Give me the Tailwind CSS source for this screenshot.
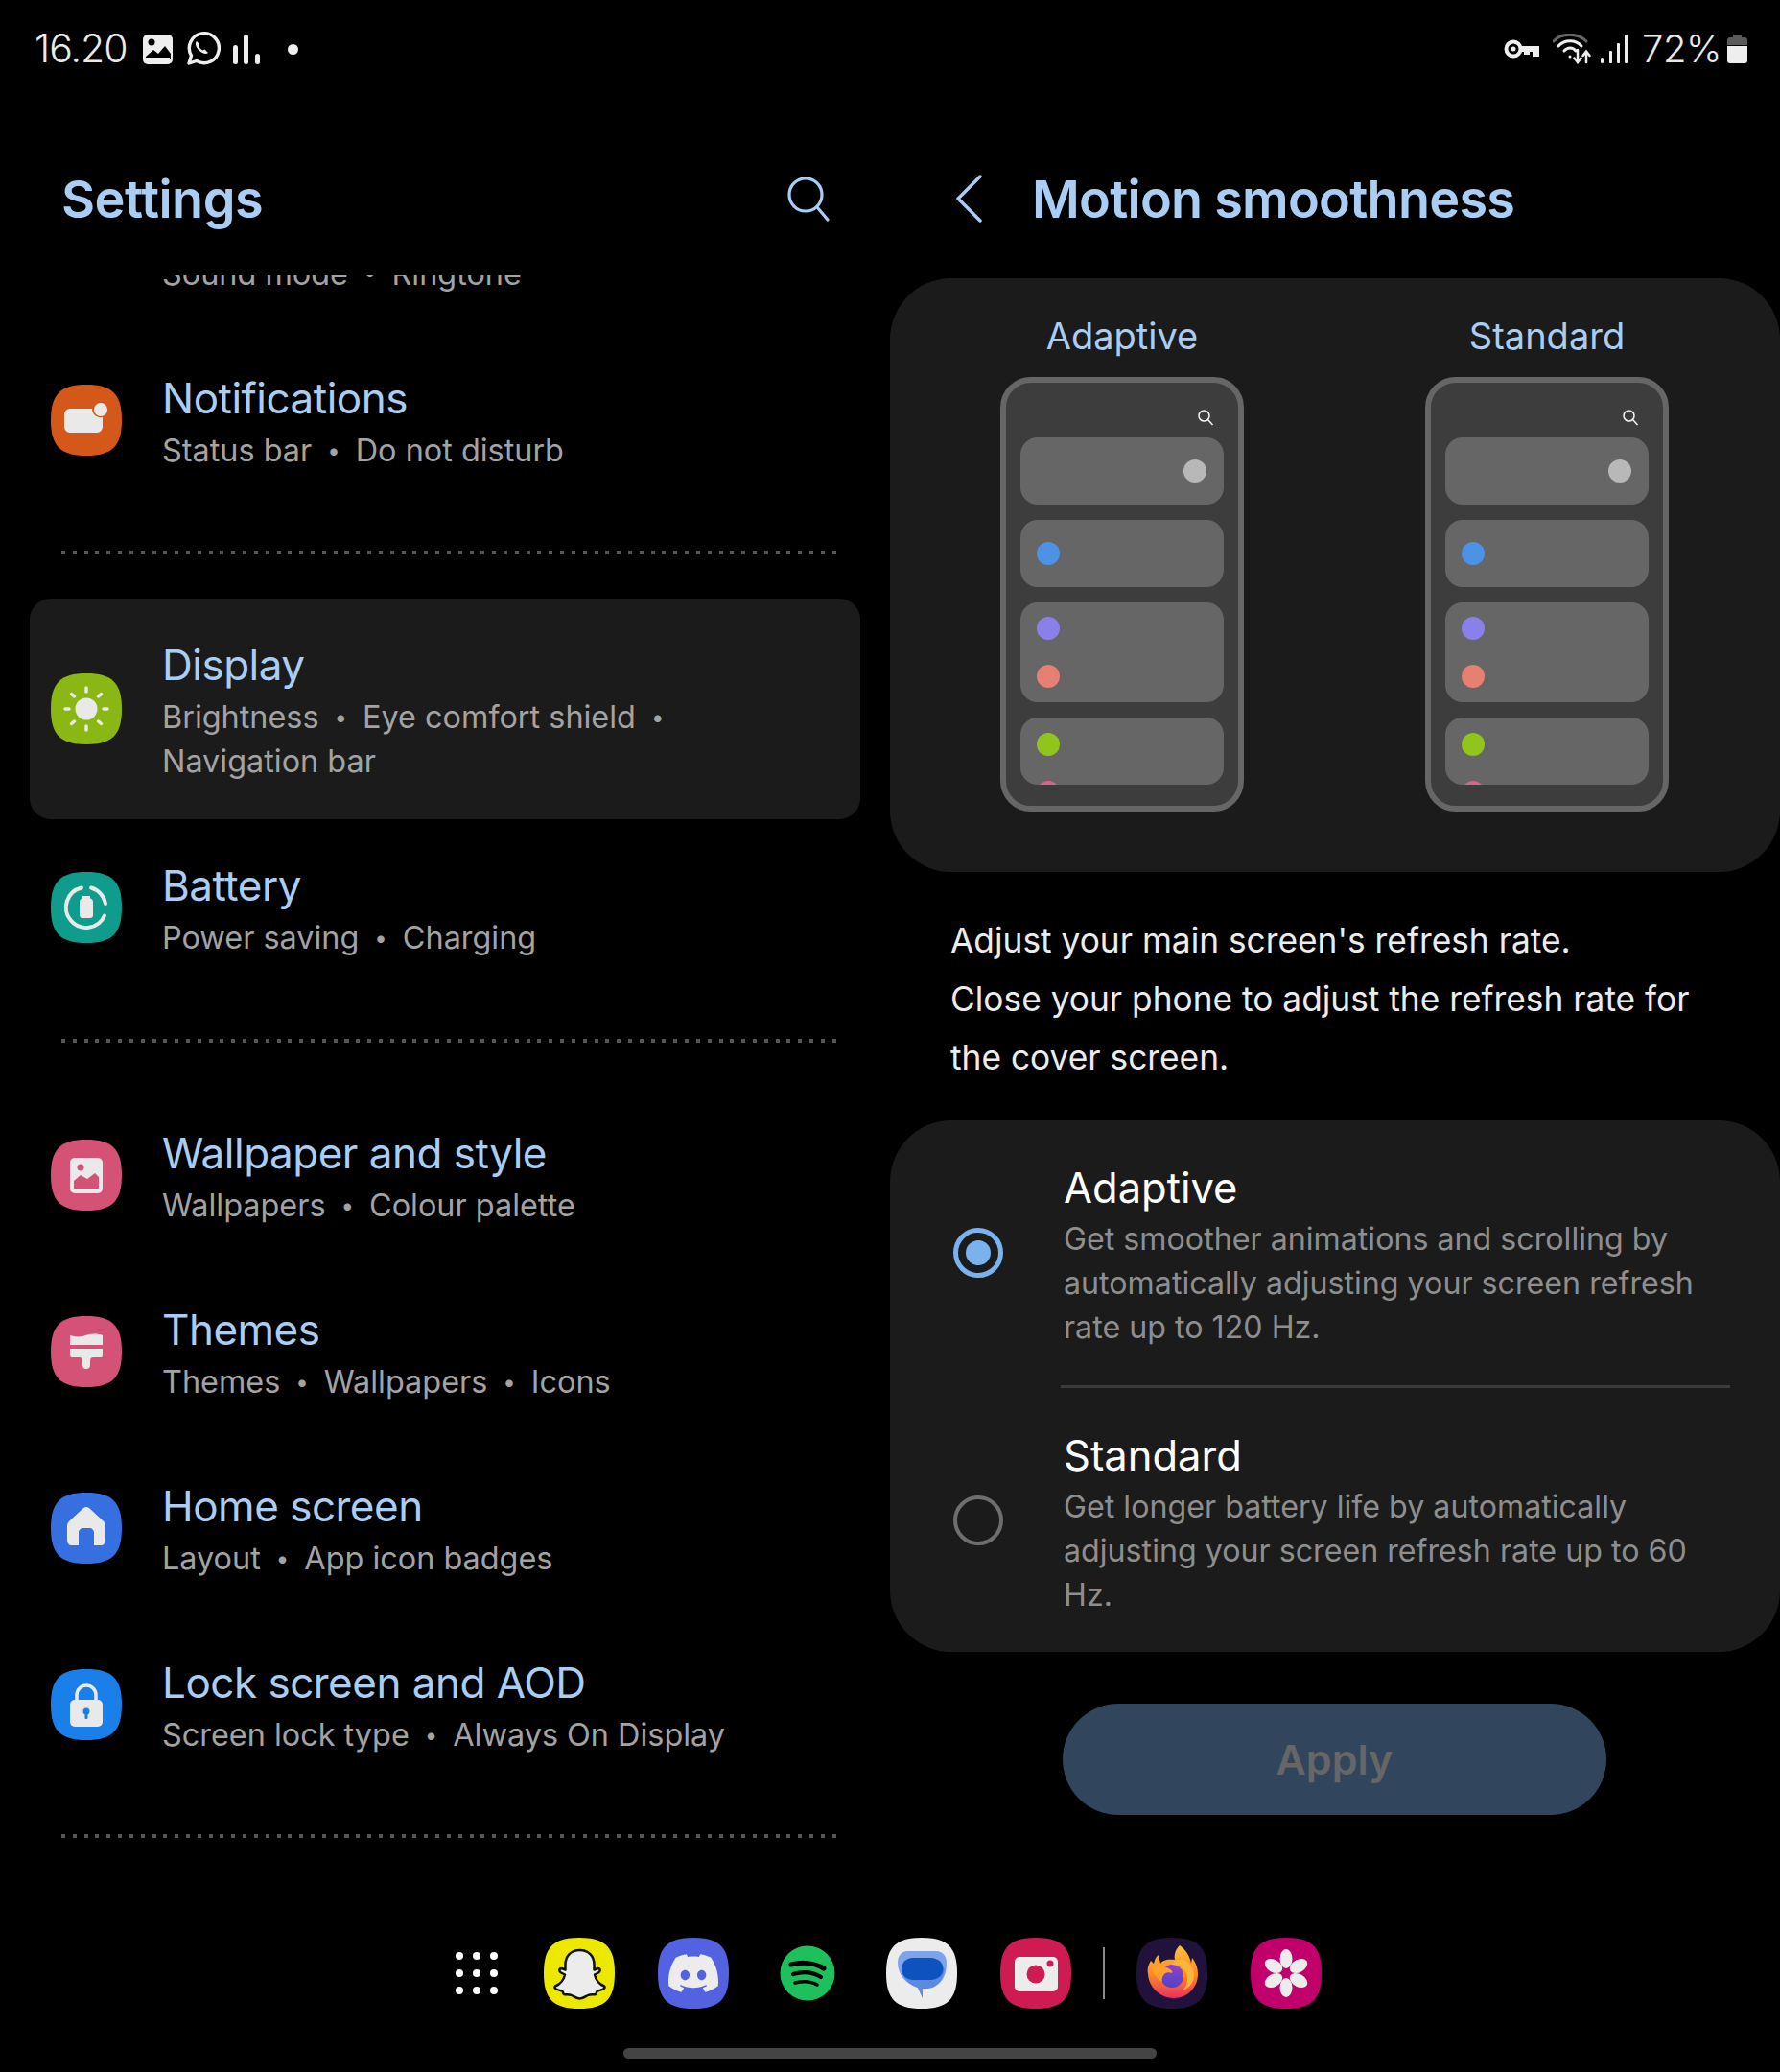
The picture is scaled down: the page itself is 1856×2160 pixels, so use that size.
<!doctype html>
<html lang="en"><head><meta charset="utf-8"><title>Motion smoothness</title>
<script src="https://cdn.jsdelivr.net/npm/@tailwindcss/browser@4"></script></head>
<body class="bg-black">
<div class="w-[1856px] h-[2160px] bg-black overflow-hidden flex flex-col font-['Inter','Liberation_Sans',sans-serif] text-white">
  <!-- status bar -->
  <div class="h-[102px] flex items-center justify-between pl-[36px] pr-[34px] text-[#eaeaea] shrink-0">
    <div class="flex items-center">
      <span class="text-[41px] font-light tracking-[-1px] w-[110px]">16.20</span>
      <svg class="ml-[2px]" width="34" height="34" viewBox="0 0 34 34"><rect x="1" y="2" width="31" height="31" rx="5" fill="#eee"/><circle cx="10" cy="10" r="3.5" fill="#000"/><path d="M4 25l8-7 5 4 7-8 6 8v5H4z" fill="#000"/><rect x="4" y="26" width="25" height="3" fill="#eee"/></svg>
      <svg class="ml-[10px]" width="38" height="38" viewBox="0 0 38 38" fill="none"><path d="M5 34l2.5-8A15.5 15.5 0 1 1 13 31.5z" stroke="#eee" stroke-width="3.4" stroke-linejoin="round"/><path d="M13 11c-2 2-1 6 2.500 9.500s7.500 4.500 9.500 2.500l-3.500-3.500-2 1c-1.500-.5-4-3-4.500-4.500l1-2z" fill="#eee"/></svg>
      <svg class="ml-[12px]" width="32" height="34" viewBox="0 0 32 34" fill="#eee"><rect x="1" y="13" width="5" height="20" rx="2.500"/><rect x="12" y="2" width="5" height="31" rx="2.500"/><rect x="24" y="22" width="5" height="11" rx="2.500"/></svg>
      <span class="ml-[26px] w-[11px] h-[11px] rounded-full bg-[#eee]"></span>
    </div>
    <div class="flex items-center">
      <svg width="38" height="22" viewBox="0 0 38 22" fill="none"><circle cx="10" cy="11" r="7.500" stroke="#eee" stroke-width="4"/><circle cx="10" cy="11" r="2.500" fill="#eee"/><path d="M17 8h20v11h-7v-5h-3v3h-6v-3h-4z" fill="#eee"/></svg>
      <svg class="ml-[13px]" width="40" height="32" viewBox="0 0 40 32" fill="none" stroke="#eee" stroke-width="3" stroke-linecap="round"><path d="M1 8C9 -1 26 -1 35 8" stroke="#666"/><path d="M6 13C12 6 24 6 30 13"/><path d="M12 18c3.500-4 9-4 12 0"/><circle cx="18" cy="24" r="1.500" fill="#eee" stroke="none"/><path d="M26 17v12m-3.500-3.500L26 30l3.500-4.500" stroke-width="2.500"/><path d="M35 30V19m-3.500 4L35 18.500l3.500 4.500" stroke-width="2.500"/></svg>
      <svg class="ml-[10px]" width="28" height="30" viewBox="0 0 28 30" fill="#eee"><rect x="0" y="24" width="3" height="6" rx="1.500"/><rect x="9" y="17" width="3" height="13" rx="1"/><rect x="17" y="9" width="3" height="21" rx="1"/><rect x="25" y="0" width="3" height="30" rx="1"/></svg>
      <span class="ml-[15px] text-[40px] font-light tracking-[-0.5px] w-[84px]">72%</span>
      <svg class="ml-[5px]" width="21" height="30" viewBox="0 0 21 30"><path d="M6 0h9v3h3a3 3 0 0 1 3 3v5H0V6a3 3 0 0 1 3-3h3z" fill="#5a5a5a"/><path d="M0 12h21v15a3 3 0 0 1-3 3H3a3 3 0 0 1-3-3z" fill="#eee"/></svg>
    </div>
  </div>

  <div class="h-[1918px] flex shrink-0">
    <!-- left pane -->
    <div class="w-[928px] flex flex-col shrink-0">
      <div class="h-[185px] pt-[25px] pl-[64px] pr-[61px] flex items-center justify-between shrink-0">
        <h1 class="text-[54px] font-semibold text-[#a9cdf3] tracking-[-0.5px]">Settings</h1>
        <svg width="48" height="48" viewBox="0 0 48 48" fill="none" stroke="#a9cdf3" stroke-width="3.200" stroke-linecap="round"><circle cx="21" cy="20" r="17"/><path d="M33 33l11 13"/></svg>
      </div>
      <div class="flex-1 overflow-hidden">
        <div class="mt-[-125px] mx-[31px] px-[22px] py-[37px] flex items-center">
          <div class="w-[74px] h-[74px]"></div>
          <div class="ml-[42px]"><div class="h-[64px]"></div><div class="text-[32.4px] leading-[46px] text-[#a3a3a3]">Sound mode<span class="mx-[16px] text-[24px] leading-none align-[5px]">•</span>Ringtone</div></div>
        </div>
        <div class="mx-[31px] px-[22px] py-[37px] flex items-center">
          <svg width="74" height="74" viewBox="0 0 74 74"><path d="M37 0C64 0 74 10 74 37S64 74 37 74 0 64 0 37 10 0 37 0Z" fill="#d4581a"/><path d="M20 25h23a9 9 0 0 0 11 9v10a6 6 0 0 1-6 6H20a6 6 0 0 1-6-6V31a6 6 0 0 1 6-6z" fill="#e9e9e9"/><circle cx="52" cy="26" r="7" fill="#e9e9e9"/></svg>
          <div class="ml-[42px]"><div class="text-[44px] leading-[64px] text-[#a9cdf3] tracking-[-0.5px]">Notifications</div><div class="text-[32.4px] leading-[46px] text-[#a3a3a3]">Status bar<span class="mx-[16px] text-[24px] leading-none align-[3px]">•</span>Do not disturb</div></div>
        </div>
        <div class="mt-[44px] ml-[64px] w-[808px] h-[4px] bg-[repeating-linear-gradient(90deg,#555_0_4px,transparent_4px_11.82px)]"></div>
        <div class="mt-[46px] mx-[31px] px-[22px] py-[37px] flex items-center bg-[#1b1b1b] rounded-[22px]">
          <svg width="74" height="74" viewBox="0 0 74 74"><path d="M37 0C64 0 74 10 74 37S64 74 37 74 0 64 0 37 10 0 37 0Z" fill="#8ab713"/><circle cx="37" cy="37" r="11.500" fill="#e9e9e9"/><path d="M37 15v4M37 55v4M15 37h4M55 37h4M21.500 21.500l3 2.500M49.500 50l3 2.500M52.500 21.500l-3 2.500M24.500 50l-3 2.500" stroke="#e9e9e9" stroke-width="3.500" stroke-linecap="round"/></svg>
          <div class="ml-[42px]"><div class="text-[44px] leading-[64px] text-[#a9cdf3] tracking-[-0.5px]">Display</div><div class="text-[32.4px] leading-[46px] text-[#a3a3a3]">Brightness<span class="mx-[16px] text-[24px] leading-none align-[3px]">•</span>Eye comfort shield<span class="mx-[16px] text-[24px] leading-none align-[3px]">•</span><br>Navigation bar</div></div>
        </div>
        <div class="mx-[31px] px-[22px] py-[37px] flex items-center">
          <svg width="74" height="74" viewBox="0 0 74 74" fill="none"><path d="M37 0C64 0 74 10 74 37S64 74 37 74 0 64 0 37 10 0 37 0Z" fill="#0f9c8c"/><path d="M32 16.500A21 21 0 1 0 56 45.500" stroke="#e9e9e9" stroke-width="4" stroke-linecap="round"/><path d="M42 16.500A21 21 0 0 1 57 33" stroke="#e9e9e9" stroke-width="4" stroke-linecap="round"/><path d="M33 25h8v2.500a4 4 0 0 1 3 4V45a3 3 0 0 1-3 3h-8a3 3 0 0 1-3-3V31.500a4 4 0 0 1 3-4z" fill="#e9e9e9"/></svg>
          <div class="ml-[42px]"><div class="text-[44px] leading-[64px] text-[#a9cdf3] tracking-[-0.5px]">Battery</div><div class="text-[32.4px] leading-[46px] text-[#a3a3a3]">Power saving<span class="mx-[16px] text-[24px] leading-none align-[3px]">•</span>Charging</div></div>
        </div>
        <div class="mt-[45px] ml-[64px] w-[808px] h-[4px] bg-[repeating-linear-gradient(90deg,#555_0_4px,transparent_4px_11.82px)]"></div>
        <div class="mt-[46px] mx-[31px] px-[22px] py-[37px] flex items-center">
          <svg width="74" height="74" viewBox="0 0 74 74"><path d="M37 0C64 0 74 10 74 37S64 74 37 74 0 64 0 37 10 0 37 0Z" fill="#d45275"/><rect x="20" y="19" width="34" height="37" rx="5" fill="#e9e9e9"/><circle cx="31" cy="29" r="3.500" fill="#d45275"/><path d="M24 51v-8l7-6 7 4 8-6 4 4v12z" fill="#d45275"/></svg>
          <div class="ml-[42px]"><div class="text-[44px] leading-[64px] text-[#a9cdf3] tracking-[-0.5px]">Wallpaper and style</div><div class="text-[32.4px] leading-[46px] text-[#a3a3a3]">Wallpapers<span class="mx-[16px] text-[24px] leading-none align-[3px]">•</span>Colour palette</div></div>
        </div>
        <div class="mx-[31px] px-[22px] py-[37px] flex items-center">
          <svg width="74" height="74" viewBox="0 0 74 74"><path d="M37 0C64 0 74 10 74 37S64 74 37 74 0 64 0 37 10 0 37 0Z" fill="#d45275"/><path d="M20 20c6 2 12 2 18-.500 6-1.500 11-1.500 16 .500v10H20z" fill="#e9e9e9"/><path d="M20 34h34v7a2 2 0 0 1-2 2H44c-3 0-3 3-3 5v3a4 4 0 0 1-8 0v-3c0-2 0-5-3-5h-8a2 2 0 0 1-2-2z" fill="#e9e9e9"/></svg>
          <div class="ml-[42px]"><div class="text-[44px] leading-[64px] text-[#a9cdf3] tracking-[-0.5px]">Themes</div><div class="text-[32.4px] leading-[46px] text-[#a3a3a3]">Themes<span class="mx-[16px] text-[24px] leading-none align-[3px]">•</span>Wallpapers<span class="mx-[16px] text-[24px] leading-none align-[3px]">•</span>Icons</div></div>
        </div>
        <div class="mx-[31px] px-[22px] py-[37px] flex items-center">
          <svg width="74" height="74" viewBox="0 0 74 74"><path d="M37 0C64 0 74 10 74 37S64 74 37 74 0 64 0 37 10 0 37 0Z" fill="#356fe0"/><path d="M37 15c2 0 3 1 4 2l13 12c2 2 3 3 3 6v14c0 4-2 6-5 6h-7V42c0-3-2-5-5-5h-6c-3 0-5 2-5 5v13h-7c-3 0-5-2-5-6V35c0-3 1-4 3-6l13-12c1-1 2-2 4-2z" fill="#e9e9e9"/></svg>
          <div class="ml-[42px]"><div class="text-[44px] leading-[64px] text-[#a9cdf3] tracking-[-0.5px]">Home screen</div><div class="text-[32.4px] leading-[46px] text-[#a3a3a3]">Layout<span class="mx-[16px] text-[24px] leading-none align-[3px]">•</span>App icon badges</div></div>
        </div>
        <div class="mx-[31px] px-[22px] py-[37px] flex items-center">
          <svg width="74" height="74" viewBox="0 0 74 74"><path d="M37 0C64 0 74 10 74 37S64 74 37 74 0 64 0 37 10 0 37 0Z" fill="#1a7fe8"/><path d="M27 34v-7a10 10 0 0 1 20 0v7" fill="none" stroke="#e9e9e9" stroke-width="3.500"/><rect x="20" y="32" width="34" height="28" rx="5" fill="#e9e9e9"/><circle cx="37" cy="44" r="3.500" fill="#1a7fe8"/><rect x="35.500" y="45" width="3" height="7" rx="1" fill="#1a7fe8"/></svg>
          <div class="ml-[42px]"><div class="text-[44px] leading-[64px] text-[#a9cdf3] tracking-[-0.5px]">Lock screen and AOD</div><div class="text-[32.4px] leading-[46px] text-[#a3a3a3]">Screen lock type<span class="mx-[16px] text-[24px] leading-none align-[3px]">•</span>Always On Display</div></div>
        </div>
        <div class="mt-[43px] ml-[64px] w-[808px] h-[4px] bg-[repeating-linear-gradient(90deg,#555_0_4px,transparent_4px_11.82px)]"></div>
      </div>
    </div>

    <!-- right pane -->
    <div class="w-[928px] flex flex-col shrink-0">
      <div class="h-[188px] pt-[22px] pl-[68px] flex items-center shrink-0">
        <svg width="30" height="50" viewBox="0 0 30 50" fill="none" stroke="#a9cdf3" stroke-width="3.500" stroke-linecap="round" stroke-linejoin="round"><path d="M26 2L3 25l23 23"/></svg>
        <h2 class="ml-[50px] text-[54px] font-semibold text-[#a9cdf3] tracking-[-0.75px]">Motion smoothness</h2>
      </div>
      <div class="h-[619px] bg-[#1b1b1b] rounded-[64px] pt-[34px] grid grid-cols-[115px_254px_189px_254px] grid-rows-[69px_453px] shrink-0">
        <div class="col-start-2 text-center text-[38px] leading-[52px] text-[#a9cdf3] whitespace-nowrap">Adaptive</div>
        <div class="col-start-4 text-center text-[38px] leading-[52px] text-[#a9cdf3] whitespace-nowrap">Standard</div>
        <div class="col-start-2 row-start-2 w-[254px] h-[453px] border-[6px] border-[#666] bg-[#3d3d3d] rounded-[32px] px-[15px] overflow-hidden">
          <div class="h-[57px] flex justify-end items-end pr-[10px] pb-[12px]"><svg width="18" height="18" viewBox="0 0 18 18" fill="none" stroke="#eee" stroke-width="1.600"><circle cx="7.500" cy="7.500" r="5.500"/><path d="M11.500 11.500l5 5.500"/></svg></div>
          <div class="flex flex-col gap-[16px]">
            <div class="h-[70px] shrink-0 rounded-[18px] bg-[#666] flex items-center justify-end pr-[18px]"><span class="w-[24px] h-[24px] rounded-full bg-[#b8b8b8]"></span></div>
            <div class="h-[70px] shrink-0 rounded-[18px] bg-[#666] flex items-center pl-[17px]"><span class="w-[24px] h-[24px] rounded-full bg-[#4c93e6]"></span></div>
            <div class="h-[104px] shrink-0 rounded-[18px] bg-[#666] pl-[17px] pt-[15px] flex flex-col gap-[26px]"><span class="w-[24px] h-[24px] rounded-full bg-[#8b80ea]"></span><span class="w-[24px] h-[24px] rounded-full bg-[#e58072]"></span></div>
            <div class="h-[70px] shrink-0 rounded-[18px] overflow-hidden bg-[#666] pl-[17px] pt-[16px] flex flex-col gap-[26px]"><span class="w-[24px] h-[24px] shrink-0 rounded-full bg-[#92c41e]"></span><span class="w-[24px] h-[24px] shrink-0 rounded-full bg-[#d9628a]"></span></div>
          </div>
        </div>
        <div class="col-start-4 row-start-2 w-[254px] h-[453px] border-[6px] border-[#666] bg-[#3d3d3d] rounded-[32px] px-[15px] overflow-hidden">
          <div class="h-[57px] flex justify-end items-end pr-[10px] pb-[12px]"><svg width="18" height="18" viewBox="0 0 18 18" fill="none" stroke="#eee" stroke-width="1.600"><circle cx="7.500" cy="7.500" r="5.500"/><path d="M11.500 11.500l5 5.500"/></svg></div>
          <div class="flex flex-col gap-[16px]">
            <div class="h-[70px] shrink-0 rounded-[18px] bg-[#666] flex items-center justify-end pr-[18px]"><span class="w-[24px] h-[24px] rounded-full bg-[#b8b8b8]"></span></div>
            <div class="h-[70px] shrink-0 rounded-[18px] bg-[#666] flex items-center pl-[17px]"><span class="w-[24px] h-[24px] rounded-full bg-[#4c93e6]"></span></div>
            <div class="h-[104px] shrink-0 rounded-[18px] bg-[#666] pl-[17px] pt-[15px] flex flex-col gap-[26px]"><span class="w-[24px] h-[24px] rounded-full bg-[#8b80ea]"></span><span class="w-[24px] h-[24px] rounded-full bg-[#e58072]"></span></div>
            <div class="h-[70px] shrink-0 rounded-[18px] overflow-hidden bg-[#666] pl-[17px] pt-[16px] flex flex-col gap-[26px]"><span class="w-[24px] h-[24px] shrink-0 rounded-full bg-[#92c41e]"></span><span class="w-[24px] h-[24px] shrink-0 rounded-full bg-[#d9628a]"></span></div>
          </div>
        </div>
      </div>
      <p class="mt-[41px] ml-[63px] text-[35.3px] leading-[61px] text-[#ececec] whitespace-nowrap">Adjust your main screen's refresh rate.<br>Close your phone to adjust the refresh rate for<br>the cover screen.</p>
      <div class="mt-[35px] h-[554px] bg-[#1b1b1b] rounded-[64px] shrink-0 pl-[66px] flex flex-col">
        <div class="h-[276px] flex items-start">
          <div class="mt-[112px] w-[52px] h-[52px] rounded-full border-[5px] border-[#7ab2ee] flex items-center justify-center"><span class="w-[26px] h-[26px] rounded-full bg-[#7ab2ee]"></span></div>
          <div class="ml-[63px] mt-[39px]"><div class="text-[43.5px] leading-[62px] text-white">Adaptive</div><div class="text-[32.2px] leading-[46px] text-[#8e8e8e] whitespace-nowrap">Get smoother animations and scrolling by<br>automatically adjusting your screen refresh<br>rate up to 120 Hz.</div></div>
        </div>
        <div class="ml-[112px] mr-[52px] h-[3px] bg-[#3b3b3b]"></div>
        <div class="h-[275px] flex items-start">
          <div class="mt-[112px] w-[52px] h-[52px] rounded-full border-[4px] border-[#6e6e6e]"></div>
          <div class="ml-[63px] mt-[39px]"><div class="text-[43.5px] leading-[62px] text-white">Standard</div><div class="text-[32.2px] leading-[46px] text-[#8e8e8e] whitespace-nowrap">Get longer battery life by automatically<br>adjusting your screen refresh rate up to 60<br>Hz.</div></div>
        </div>
      </div>
      <div class="mt-[54px] ml-[180px] w-[567px] h-[116px] rounded-full bg-[#31455d] flex items-center justify-center text-[43px] font-semibold text-[#666]">Apply</div>
    </div>
  </div>

  <!-- dock -->
  <div class="h-[74px] flex items-center pl-[475px] shrink-0">
    <svg class="mr-[48px]" width="44" height="44" viewBox="0 0 44 44" fill="#fff"><circle cx="4" cy="4" r="4"/><circle cx="22" cy="4" r="4"/><circle cx="40" cy="4" r="4"/><circle cx="4" cy="22" r="4"/><circle cx="22" cy="22" r="4"/><circle cx="40" cy="22" r="4"/><circle cx="4" cy="40" r="4"/><circle cx="22" cy="40" r="4"/><circle cx="40" cy="40" r="4"/></svg>
    <div class="flex items-center gap-[45px]">
      <svg width="74" height="74" viewBox="0 0 74 74"><path d="M37 0C64 0 74 10 74 37S64 74 37 74 0 64 0 37 10 0 37 0Z" fill="#ece800"/><path d="M37.500 13c9 0 15 6 15 15v5.500l4-1.500c2.500 0 3 3 .5 4.500l-4 2c1 5 5 10 10 12 1 1 .5 2-1 3-2 1-4 1.500-6 2-1 0-1 3-2 3.500-2 .5-5-.5-8 1-2 1-5 3.500-8.500 3.500s-6.500-2.500-8.500-3.500c-3-1.500-6-.5-8-1-1-.5-1-3.500-2-3.500-2-.5-4-1-6-2-1.500-1-2-2-1-3 5-2 9-7 10-12l-4-2c-2.500-1.500-2-4.500.5-4.500l4 1.500V28c0-9 6-15 15-15z" fill="#ececec" stroke="#111" stroke-width="2.500" stroke-linejoin="round"/></svg>
      <svg width="74" height="74" viewBox="0 0 74 74"><path d="M37 0C64 0 74 10 74 37S64 74 37 74 0 64 0 37 10 0 37 0Z" fill="#5262e0"/><svg x="11" y="11" width="52" height="52" viewBox="0 0 24 24"><path fill="#ececec" d="M20.317 4.3698a19.7913 19.7913 0 00-4.8851-1.5152.0741.0741 0 00-.0785.0371c-.211.3753-.4447.8648-.6083 1.2495-1.8447-.2762-3.68-.2762-5.4868 0-.1636-.3933-.4058-.8742-.6177-1.2495a.077.077 0 00-.0785-.037 19.7363 19.7363 0 00-4.8852 1.515.0699.0699 0 00-.0321.0277C.5334 9.0458-.319 13.5799.0992 18.0578a.0824.0824 0 00.0312.0561c2.0528 1.5076 4.0413 2.4228 5.9929 3.0294a.0777.0777 0 00.0842-.0276c.4616-.6304.8731-1.2952 1.226-1.9942a.076.076 0 00-.0416-.1057c-.6528-.2476-1.2743-.5495-1.8722-.8923a.077.077 0 01-.0076-.1277c.1258-.0943.2517-.1923.3718-.2914a.0743.0743 0 01.0776-.0105c3.9278 1.7933 8.18 1.7933 12.0614 0a.0739.0739 0 01.0785.0095c.1202.099.246.1981.3728.2924a.077.077 0 01-.0066.1276 12.2986 12.2986 0 01-1.873.8914.0766.0766 0 00-.0407.1067c.3604.698.7719 1.3628 1.225 1.9932a.076.076 0 00.0842.0286c1.961-.6067 3.9495-1.5219 6.0023-3.0294a.077.077 0 00.0313-.0552c.5004-5.177-.8382-9.6739-3.5485-13.6604a.061.061 0 00-.0312-.0286zM8.02 15.3312c-1.1825 0-2.1569-1.0857-2.1569-2.419 0-1.3332.9555-2.4189 2.157-2.4189 1.2108 0 2.1757 1.0952 2.1568 2.419 0 1.3332-.9555 2.4189-2.1569 2.4189zm7.9748 0c-1.1825 0-2.1569-1.0857-2.1569-2.419 0-1.3332.9554-2.4189 2.1569-2.4189 1.2108 0 2.1757 1.0952 2.1568 2.419 0 1.3332-.946 2.4189-2.1568 2.4189Z"/></svg></svg>
      <svg width="74" height="74" viewBox="0 0 74 74" fill="none"><circle cx="37" cy="37" r="28.500" fill="#1ec05c"/><path d="M20 28c11-3 24-2 34 4" stroke="#000" stroke-width="5" stroke-linecap="round"/><path d="M22 38c10-3 21-2 29 3" stroke="#000" stroke-width="4.200" stroke-linecap="round"/><path d="M24 47c8-2 17-1.500 23 2" stroke="#000" stroke-width="3.500" stroke-linecap="round"/></svg>
      <svg width="74" height="74" viewBox="0 0 74 74"><path d="M37 0C64 0 74 10 74 37S64 74 37 74 0 64 0 37 10 0 37 0Z" fill="#ececec"/><path d="M22 14h30c7 0 11 5 11 12 0 14-5 22-15 26-4 1-8 1-10 1v10L33 52C20 48 12 38 12 26c0-7 4-12 10-12z" fill="#7fa3ea"/><path d="M28 32h33c-1 10-6 17-13 20-4 1-8 1-10 1v10L33 52c-9-3-14-9-17-16z" fill="#5d8ae0"/><path d="M28 21h18c8 0 13.500 5 13.500 11.500S54 44 46 44H28c-7 0-12-5-12-11.500S21 21 28 21z" fill="#0d52bf"/></svg>
      <svg width="74" height="74" viewBox="0 0 74 74"><path d="M37 0C64 0 74 10 74 37S64 74 37 74 0 64 0 37 10 0 37 0Z" fill="#cf1b53"/><rect x="15" y="20" width="45" height="36" rx="5" fill="#ececec"/><circle cx="37" cy="38" r="9.500" fill="#cf1b53"/><circle cx="52" cy="27" r="3.500" fill="#cf1b53"/></svg>
      <span class="w-[2px] h-[54px] bg-[#8a8a8a] mx-[-12px]"></span>
      <svg width="74" height="74" viewBox="0 0 74 74"><defs><linearGradient id="ff" x1="0" y1="0" x2="0" y2="1"><stop offset="0" stop-color="#ffc13d"/><stop offset=".55" stop-color="#ff8a1f"/><stop offset="1" stop-color="#ec2d62"/></linearGradient><linearGradient id="fp" x1="0" y1="0" x2="0" y2="1"><stop offset="0" stop-color="#9a3fc4"/><stop offset="1" stop-color="#4a45c8"/></linearGradient></defs><path d="M37 0C64 0 74 10 74 37S64 74 37 74 0 64 0 37 10 0 37 0Z" fill="#20123a"/><path d="M45 8c-5 5-6 11-5 15-9-1-13 1-15 4l-2-9c-3 2-4 5-5 9l-3-3c-3 5-4 9-3 14 1 14 13 25 27 25 15 0 25-12 25-25 0-8-3-13-6-17l-1 6C56 20 52 13 45 8z" fill="url(#ff)"/><circle cx="37" cy="40" r="12" fill="url(#fp)"/><path d="M37 28c9 0 16 6 16 15 0 5-2 9-5 12 8-3 12-9 12-16 0-5-2-9-5-12-4-5-11-7-18 1z" fill="#ffb43a"/><path d="M16 30c6-2 13-1 19 3 2 1 3 3 2 4-2-1-6-1-8 1-2 2-3 5-2 8-6-3-10-9-11-16z" fill="#ffa12e"/></svg>
      <svg width="74" height="74" viewBox="0 0 74 74"><path d="M37 0C64 0 74 10 74 37S64 74 37 74 0 64 0 37 10 0 37 0Z" fill="#c2006b"/><g fill="#ececec"><ellipse cx="37" cy="22" rx="6.500" ry="10"/><ellipse cx="37" cy="52" rx="6.500" ry="10"/><ellipse cx="37" cy="22" rx="6.500" ry="10" transform="rotate(60 37 37)"/><ellipse cx="37" cy="22" rx="6.500" ry="10" transform="rotate(120 37 37)"/><ellipse cx="37" cy="22" rx="6.500" ry="10" transform="rotate(240 37 37)"/><ellipse cx="37" cy="22" rx="6.500" ry="10" transform="rotate(300 37 37)"/></g><circle cx="37" cy="37" r="5" fill="#c2006b"/></svg>
    </div>
  </div>
  <div class="mt-[41px] ml-[650px] w-[556px] h-[11px] rounded-full bg-[#444] shrink-0"></div>
</div>
</body></html>
